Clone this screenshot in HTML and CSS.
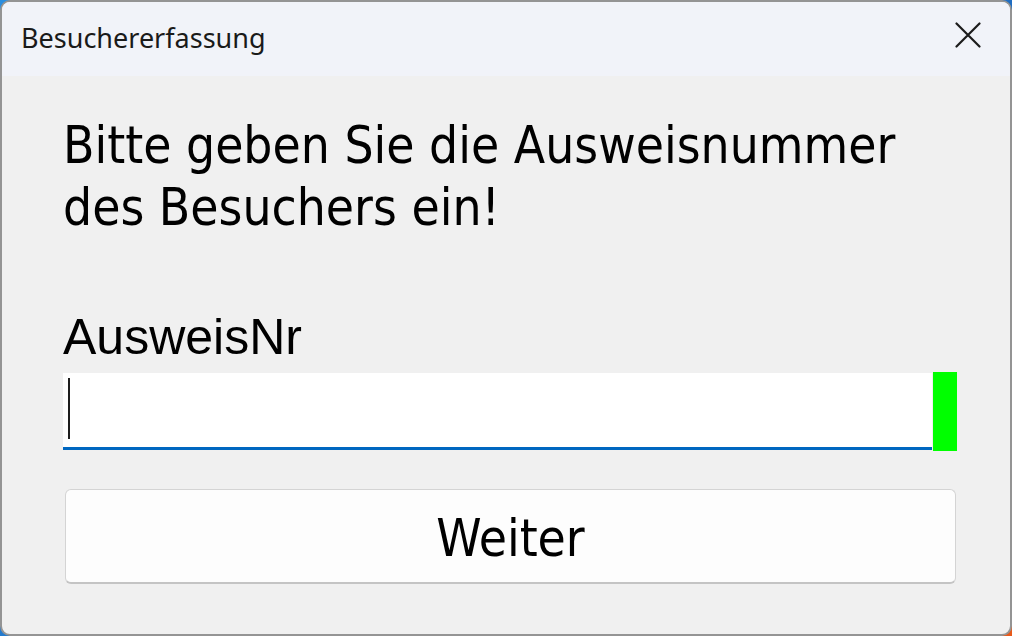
FILE: index.html
```html
<!DOCTYPE html>
<html lang="de">
<head>
<meta charset="utf-8">
<title>Besuchererfassung</title>
<link rel="stylesheet" href="styles.css">
</head>
<body>
<div class="window">
  <div class="titlebar">
    <span class="title">Besuchererfassung</span>
    <span class="close" aria-label="Schließen">
      <svg width="26" height="26" viewBox="0 0 26 26"><path d="M1.5 1.5 L24.5 24.5 M24.5 1.5 L1.5 24.5" stroke="#1b1b1b" stroke-width="2.2" stroke-linecap="round" fill="none"/></svg>
    </span>
  </div>
  <div class="content">
    <div class="heading">Bitte geben Sie die Ausweisnummer<br>des Besuchers ein!</div>
    <div class="label">AusweisNr</div>
    <div class="inputrow">
      <div class="input"><span class="caret"></span></div>
      <div class="status"></div>
    </div>
    <div class="button">Weiter</div>
  </div>
</div>
</body>
</html>
```

FILE: styles.css
```css
html, body {
  margin: 0;
  padding: 0;
}
body {
  width: 1012px;
  height: 636px;
  overflow: hidden;
  background: linear-gradient(135deg, #2a8ee0 0%, #1f6fc4 60%, #2a5ea8 80%, #e85a1a 96%);
}
.window {
  box-sizing: border-box;
  width: 1012px;
  height: 636px;
  border: 2px solid #949494;
  border-radius: 10px;
  background: #f0f0f0;
  overflow: hidden;
  display: flex;
  flex-direction: column;
}
.titlebar {
  height: 74px;
  flex: none;
  background: #f1f3f9;
  display: flex;
  align-items: center;
  justify-content: space-between;
  padding: 0 29px 0 19px;
}
.title {
  font-family: "Noto Sans", "Open Sans", sans-serif;
  font-size: 27px;
  color: #1a1a1a;
  margin-top: -3px;
}
.close {
  display: flex;
  width: 26px;
  height: 26px;
  margin-top: -8px;
}
.content {
  display: flex;
  flex-direction: column;
  padding-left: 61px;
}
.heading {
  margin-top: 39px;
  font-family: "DejaVu Sans Condensed", "DejaVu Sans", sans-serif;
  font-size: 51px;
  line-height: 62px;
  color: #000;
}
.label {
  margin-top: 70px;
  font-family: "Liberation Sans", Arial, sans-serif;
  font-size: 50px;
  line-height: 56px;
  color: #000;
}
.inputrow {
  margin-top: 7px;
  display: flex;
  align-items: flex-start;
  gap: 1px;
}
.input {
  box-sizing: border-box;
  width: 869px;
  height: 77px;
  margin-top: 1px;
  background: #fff;
  border-bottom: 3px solid #0067c0;
  padding: 5px 0 0 5px;
}
.caret {
  display: block;
  width: 2px;
  height: 61px;
  background: #1e1e1e;
}
.status {
  width: 24px;
  height: 79px;
  background: #00ff00;
}
.button {
  box-sizing: border-box;
  margin-top: 38px;
  margin-left: 2px;
  width: 891px;
  height: 95px;
  background: #fdfdfd;
  border: 1px solid #d4d4d4;
  border-bottom: 2px solid #c4c4c4;
  border-radius: 6px;
  display: flex;
  align-items: center;
  justify-content: center;
  padding-top: 4px;
  font-family: "DejaVu Sans Condensed", "DejaVu Sans", sans-serif;
  font-size: 51px;
  color: #000;
}
```
